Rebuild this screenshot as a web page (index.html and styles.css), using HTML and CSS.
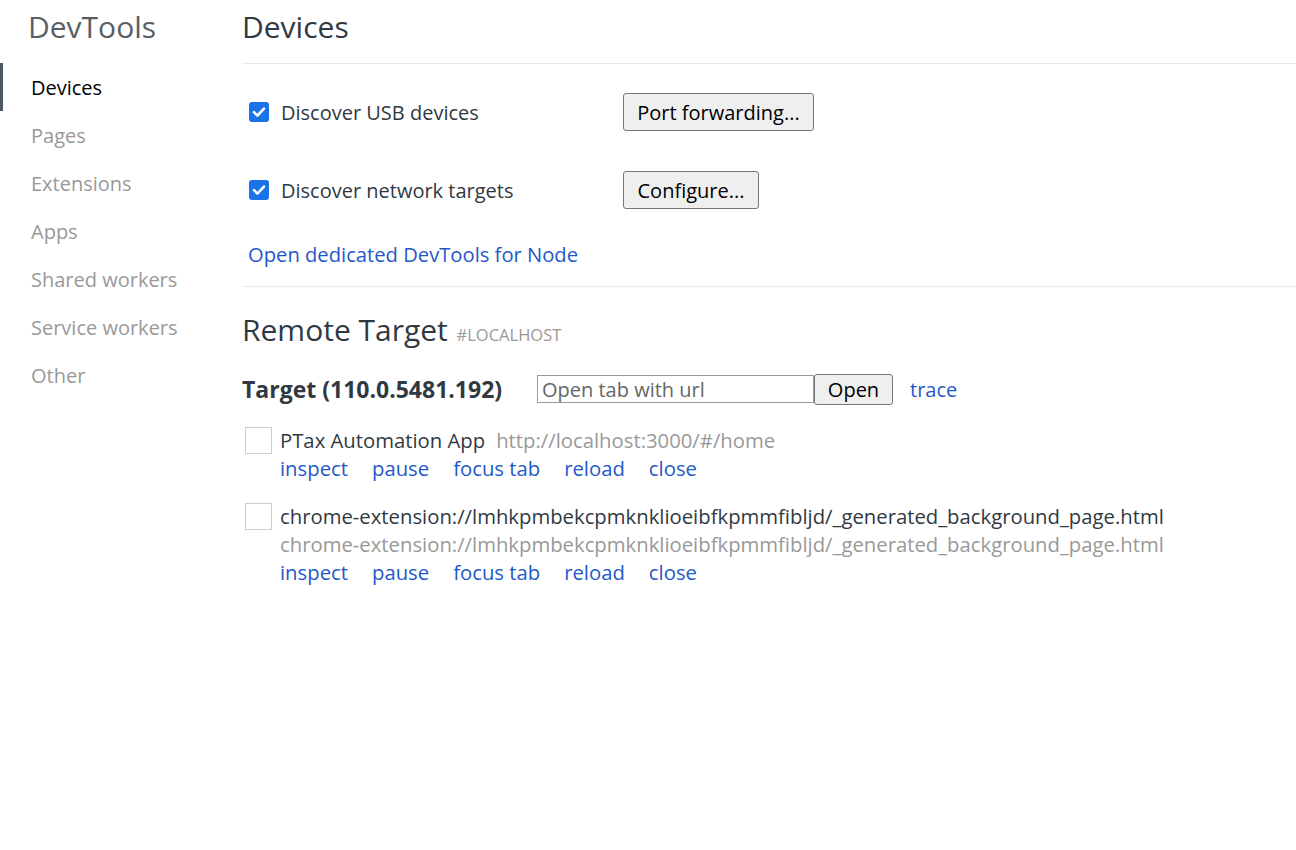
FILE: index.html
```html
<!DOCTYPE html>
<html>
<head>
<meta charset="utf-8">
<title>Inspect with Chrome Developer Tools</title>
<link rel="stylesheet" href="styles.css">
</head>
<body>
<div class="page">
  <nav class="sidebar">
    <div class="brand">DevTools</div>
    <ul class="nav">
      <li class="nav-item active">Devices</li>
      <li class="nav-item">Pages</li>
      <li class="nav-item">Extensions</li>
      <li class="nav-item">Apps</li>
      <li class="nav-item">Shared workers</li>
      <li class="nav-item">Service workers</li>
      <li class="nav-item">Other</li>
    </ul>
  </nav>
  <main class="content">
    <h1 class="page-title">Devices</h1>
    <section class="settings">
      <div class="setting-row">
        <label class="check-label">
          <span class="checkbox checked">
            <svg viewBox="0 0 20 20" width="20" height="20"><path d="M5 10.2 L8.4 13.6 L15 6.6" fill="none" stroke="#fff" stroke-width="2.6" stroke-linecap="round" stroke-linejoin="round"/></svg>
          </span>
          <span>Discover USB devices</span>
        </label>
        <button class="btn btn-large">Port forwarding...</button>
      </div>
      <div class="setting-row">
        <label class="check-label">
          <span class="checkbox checked">
            <svg viewBox="0 0 20 20" width="20" height="20"><path d="M5 10.2 L8.4 13.6 L15 6.6" fill="none" stroke="#fff" stroke-width="2.6" stroke-linecap="round" stroke-linejoin="round"/></svg>
          </span>
          <span>Discover network targets</span>
        </label>
        <button class="btn btn-large btn-configure">Configure...</button>
      </div>
      <a class="link node-link">Open dedicated DevTools for Node</a>
    </section>
    <section class="remote">
      <h2 class="remote-title">Remote Target <span class="remote-sub">#LOCALHOST</span></h2>
      <div class="target-row">
        <span class="target-name">Target (110.0.5481.192)</span>
        <div class="open-group">
          <input class="url-input" type="text" placeholder="Open tab with url">
          <button class="btn btn-open">Open</button>
        </div>
        <a class="link trace">trace</a>
      </div>
      <div class="item">
        <span class="thumb"></span>
        <div class="item-body">
          <div class="item-line"><span class="item-title">PTax Automation App</span><span class="item-url">http://localhost:3000/#/home</span></div>
          <div class="actions"><a class="link">inspect</a><a class="link">pause</a><a class="link">focus tab</a><a class="link">reload</a><a class="link">close</a></div>
        </div>
      </div>
      <div class="item">
        <span class="thumb"></span>
        <div class="item-body">
          <div class="item-line"><span class="item-title">chrome-extension://lmhkpmbekcpmknklioeibfkpmmfibljd/_generated_background_page.html</span></div>
          <div class="item-line"><span class="item-url no-margin">chrome-extension://lmhkpmbekcpmknklioeibfkpmmfibljd/_generated_background_page.html</span></div>
          <div class="actions"><a class="link">inspect</a><a class="link">pause</a><a class="link">focus tab</a><a class="link">reload</a><a class="link">close</a></div>
        </div>
      </div>
    </section>
  </main>
</div>
</body>
</html>
```

FILE: styles.css
```css
* { box-sizing: border-box; }
html, body { margin: 0; padding: 0; background: #fff; }
body {
  font-family: "Open Sans", "Noto Sans", sans-serif;
  color: #303942;
  font-size: 20px;
}
.page { display: flex; min-height: 850px; }
.sidebar { width: 242px; flex: none; padding-top: 7px; }
.brand {
  font-size: 30px;
  line-height: 40px;
  color: #5a5f66;
  padding-left: 28px;
  margin-bottom: 16px;
}
.nav { list-style: none; margin: 0; padding: 0; }
.nav-item {
  height: 48px;
  line-height: 50px;
  padding-left: 28px;
  border-left: 3px solid transparent;
  color: #999;
  font-size: 20px;
}
.nav-item.active { border-left-color: #4e5661; color: #000; }

.content { flex: 1; padding-top: 7px; }
.page-title {
  margin: 0;
  font-weight: normal;
  font-size: 30px;
  line-height: 40px;
  color: #303942;
  padding-bottom: 16px;
  border-bottom: 1px solid #eaeaea;
}
.settings {
  padding: 29px 0 18px 6px;
  border-bottom: 1px solid #eaeaea;
}
.setting-row {
  display: flex;
  align-items: center;
  height: 38px;
  margin-bottom: 40px;
}
.setting-row:nth-child(2) { margin-bottom: 31px; }
.check-label {
  display: flex;
  align-items: center;
  width: 375px;
  padding-left: 1px;
  color: #303942;
}
.checkbox {
  width: 20px; height: 20px;
  border-radius: 3px;
  background: #1a73e8;
  display: inline-flex;
  margin-right: 12px;
}
.btn {
  font-family: "Open Sans", "Noto Sans", sans-serif;
  background: #efefef;
  border: 1px solid #767676;
  border-radius: 3px;
  color: #000;
  padding: 0;
}
.btn-large { height: 38px; width: 191px; font-size: 20px; }
.btn-configure { width: 136px; }
.link { color: #1f58c9; cursor: pointer; }
.node-link { display: block; line-height: 28px; font-size: 20.2px; }

.remote-title {
  margin: 23px 0 0;
  font-weight: normal;
  font-size: 30px;
  line-height: 40px;
  color: #303942;
}
.remote-sub { font-size: 16.5px; color: #999; margin-left: 1px; }
.target-row {
  display: flex;
  align-items: center;
  height: 32px;
  margin-top: 18px;
}
.target-name { font-weight: bold; font-size: 23px; width: 295px; }
.open-group { display: flex; align-items: center; }
.url-input {
  width: 277px; height: 28px;
  border: 1px solid #999;
  font-family: "Open Sans", "Noto Sans", sans-serif;
  font-size: 20px;
  padding: 0 4px;
}
.url-input::placeholder { color: #666; }
.btn-open { width: 79px; height: 31px; font-size: 20px; }
.trace { margin-left: 17px; }

.item { display: flex; margin-top: 21px; padding-left: 3px; }
.item + .item { margin-top: 20px; }
.thumb {
  width: 27px; height: 27px;
  border: 1px solid #ccc;
  flex: none;
  margin-top: 1px;
  margin-right: 8px;
}
.item-body { line-height: 28px; font-size: 20.3px; }
.item-title { color: #303942; }
.item-url { color: #999; margin-left: 11px; }
.item-url.no-margin { margin-left: 0; }
.actions { display: flex; gap: 24px; }
```
